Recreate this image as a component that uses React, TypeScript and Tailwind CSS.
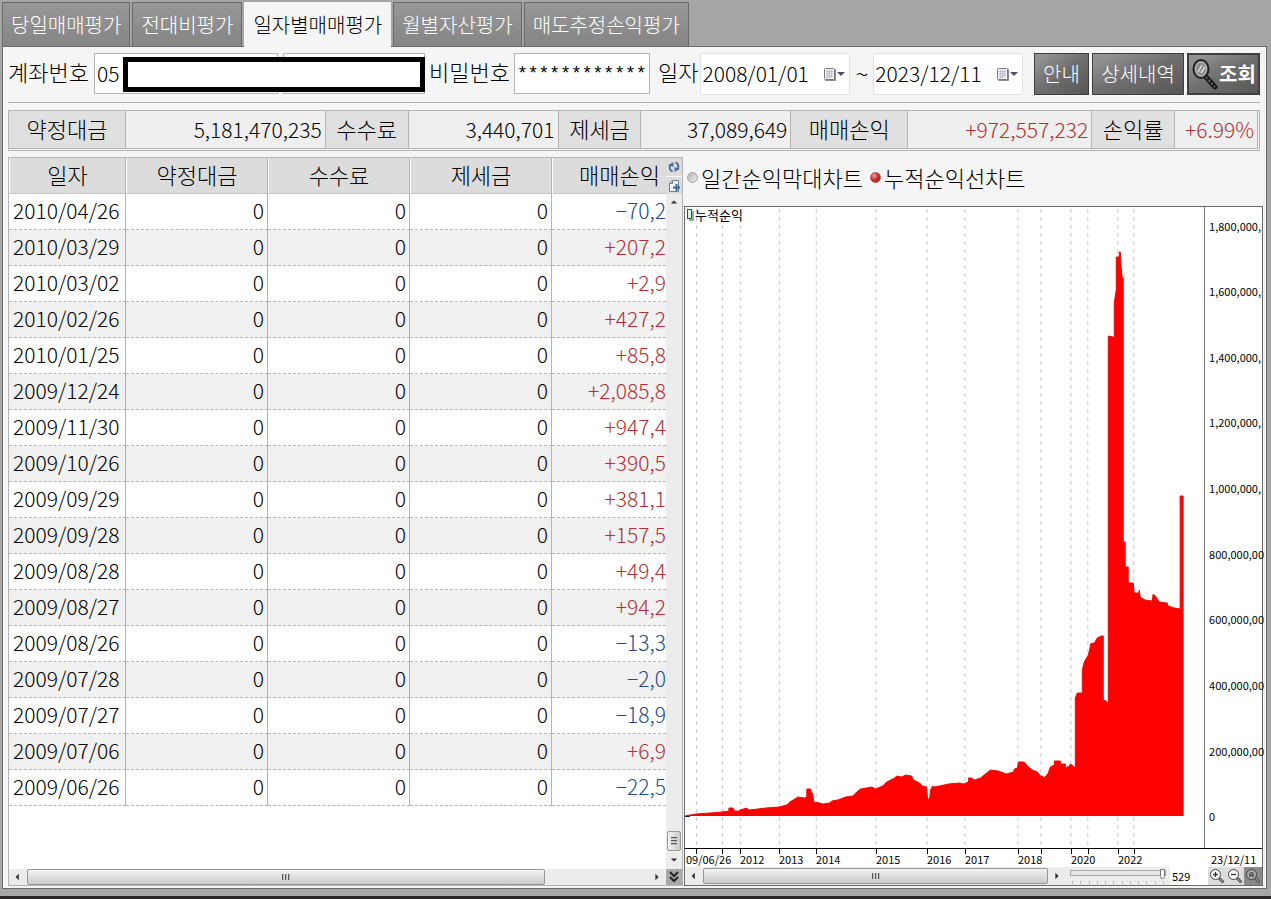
import { useState } from "react";
import type { ReactNode } from "react";

const TABS = ["당일매매평가", "전대비평가", "일자별매매평가", "월별자산평가", "매도추정손익평가"];

const ROWS: [string, string][] = [
  ["2010/04/26", "-70,2"],
  ["2010/03/29", "+207,2"],
  ["2010/03/02", "+2,9"],
  ["2010/02/26", "+427,2"],
  ["2010/01/25", "+85,8"],
  ["2009/12/24", "+2,085,8"],
  ["2009/11/30", "+947,4"],
  ["2009/10/26", "+390,5"],
  ["2009/09/29", "+381,1"],
  ["2009/09/28", "+157,5"],
  ["2009/08/28", "+49,4"],
  ["2009/08/27", "+94,2"],
  ["2009/08/26", "-13,3"],
  ["2009/07/28", "-2,0"],
  ["2009/07/27", "-18,9"],
  ["2009/07/06", "+6,9"],
  ["2009/06/26", "-22,5"],
];

const SUMMARY = [
  { label: "약정대금", value: "5,181,470,235", gain: false },
  { label: "수수료", value: "3,440,701", gain: false },
  { label: "제세금", value: "37,089,649", gain: false },
  { label: "매매손익", value: "+972,557,232", gain: true },
  { label: "손익률", value: "+6.99%", gain: true },
];

/* Plot space: x 0-520, y 0-641, zero line at y 609. */
const GRID_X = [11, 37, 55, 94, 131, 191, 242, 280, 333, 356, 386, 403, 433, 449];
const Y_LABELS = [
  { y: 19, text: "1,800,000," },
  { y: 84, text: "1,600,000," },
  { y: 150, text: "1,400,000," },
  { y: 215, text: "1,200,000," },
  { y: 281, text: "1,000,000," },
  { y: 347, text: "800,000,00" },
  { y: 412, text: "600,000,00" },
  { y: 478, text: "400,000,00" },
  { y: 544, text: "200,000,00" },
  { y: 609, text: "0" },
];
const X_LABELS = [
  { x: 1, text: "09/06/26" },
  { x: 55, text: "2012" },
  { x: 94, text: "2013" },
  { x: 131, text: "2014" },
  { x: 191, text: "2015" },
  { x: 242, text: "2016" },
  { x: 280, text: "2017" },
  { x: 333, text: "2018" },
  { x: 386, text: "2020" },
  { x: 433, text: "2022" },
  { x: 526, text: "23/12/11" },
];
const AREA =
  "0,609 5,608 11,607 25,606 37,605 44,604 44,601 48,601 50,604 55,604 55,603 62,601 64,603 73,602 81,601 94,600 102,598 105,595 110,592 113,590 120,591 122,590 122,582 126,582 126,584 128,587 129,595 135,596 138,597 145,596 147,594 153,593 161,590 168,589 172,585 176,582 187,580 191,582 198,579 202,575 210,571 212,569 217,570 221,568 227,569 229,573 235,576 238,579 242,580 243,592 245,592 246,583 248,579 249,580 255,579 264,577 275,576 279,577 284,575 284,571 287,571 290,573 296,571 301,567 306,563 314,564 322,567 329,565 330,562 333,561 334,555 340,555 343,559 348,563 353,565 356,569 358,569 360,571 364,566 366,560 370,558 370,554 376,554 376,557 381,557 381,561 385,559 386,557 389,559 391,561 391,491 393,486 398,486 398,463 400,455 404,448 406,440 406,437 410,436 413,431 417,429 419,429 419,493 422,494 424,496 424,129 429,130 430,131 430,96 432,83 432,50 435,50 435,45 436,45 437,62 438,71 439,71 439,335 441,335 441,360 444,360 444,376 449,376 450,386 455,386 455,383 456,390 461,393 468,394 469,387 472,390 475,395 483,396 484,399 490,401 496,402 496,289 499,289 499,609";

function Arrow({ dir }: { dir: "left" | "right" | "up" | "down" }) {
  const d = {
    left: "M6 1 L2 5 L6 9 Z",
    right: "M3 1 L7 5 L3 9 Z",
    up: "M1 7 L5 3 L9 7 Z",
    down: "M1 3 L5 7 L9 3 Z",
  }[dir];
  return (
    <svg viewBox="0 0 10 10" className="size-2" aria-hidden="true">
      <path d={d} fill="#333" />
    </svg>
  );
}

function HScroll({ children }: { children: ReactNode }) {
  return (
    <div className="flex h-4 items-center bg-[#ececec]">
      <button aria-label="왼쪽" className="flex w-[18px] justify-center"><Arrow dir="left" /></button>
      {children}
      <button aria-label="오른쪽" className="flex w-[18px] justify-center"><Arrow dir="right" /></button>
    </div>
  );
}

const THUMB =
  "flex items-center justify-center rounded-xs border border-[#979797] bg-linear-to-b from-[#f3f3f3] to-[#cbcbcb] h-4";

function Grip() {
  return (
    <svg viewBox="0 0 10 8" className="h-2 w-2.5" aria-hidden="true">
      <path d="M1.5 1v6M4.5 1v6M7.5 1v6" stroke="#555" />
      <path d="M2.5 1v6M5.5 1v6M8.5 1v6" stroke="#bbb" />
    </svg>
  );
}

function CalendarIcon() {
  return (
    <svg viewBox="0 0 22 14" className="h-3.5 w-[22px]" aria-hidden="true">
      <rect x="2" y="2" width="11" height="12" rx="1" fill="#8b8b98" />
      <rect x="1.500" y="1.500" width="10" height="11" rx="1" fill="#f4f4f7" stroke="#777784" />
      <path d="M3 4.500h7M3 6.500h7M3 8.500h7M3 10.500h5M4.500 3v8M6.500 3v8M8.500 3v7" stroke="#c0c0cc" />
      <path d="M14 5h8l-4 4z" fill="#4b5068" />
    </svg>
  );
}

function DateField({ label, value }: { label: string; value: string }) {
  const [text, setText] = useState(value);
  return (
    <div className="flex h-[42px] w-[150px] items-center rounded-xs border border-[#e2e2e2] bg-white pl-px">
      <input
        aria-label={label}
        value={text}
        onChange={(e) => setText(e.target.value)}
        className="w-0 min-w-0 flex-1 bg-transparent pb-0.5 text-[21px] leading-9 outline-none"
      />
      <button aria-label="달력" className="pr-1"><CalendarIcon /></button>
    </div>
  );
}

function Magnifier({ kind }: { kind: "plus" | "minus" | "all" }) {
  return (
    <svg viewBox="0 0 16 16" className="size-4" fill="none" aria-hidden="true">
      <path d="M10 10l4.500 4.500" stroke="#555" strokeWidth="3" />
      <path d="M10.500 10.500l3.500 3.500" stroke="#aaa" />
      <circle cx="6.500" cy="6.500" r="5" fill={kind === "all" ? "#aaa" : "#fafafa"} stroke="#444" />
      {kind !== "all" && <path d="M4 6.500h5" stroke="#333" strokeWidth="1.300" />}
      {kind === "plus" && <path d="M6.500 4v5" stroke="#333" strokeWidth="1.300" />}
      {kind === "all" && <path d="M5 9V5.500L6.500 4 8 5.500V9M5 7h3" stroke="#222" />}
    </svg>
  );
}

function SearchIcon() {
  return (
    <svg viewBox="0 0 28 32" className="h-8 w-7" fill="none" aria-hidden="true">
      <path d="M15 19l9 10" stroke="#1c1c1c" strokeWidth="5" strokeLinecap="round" />
      <path d="M15 19l9 10" stroke="#777" strokeWidth="1.500" strokeDasharray="2 2" />
      <ellipse cx="10" cy="11" rx="7.500" ry="9" fill="#8c8c8c" stroke="#222" strokeWidth="2" />
      <ellipse cx="10" cy="11" rx="5.500" ry="7" fill="#8a8a8a" stroke="#c9c9c9" />
      <path d="M7 14l4-7M10 15l4-6" stroke="#dedede" strokeWidth="1.500" />
    </svg>
  );
}

const DARK_BTN =
  "flex h-[42px] items-center justify-center border border-[#3f3f3f] bg-linear-to-br from-[#929292] from-10% via-[#6e6e6e] via-50% to-[#565656] text-white";

export default function App() {
  const [tab, setTab] = useState(2);
  const [mode, setMode] = useState("line");
  const [account, setAccount] = useState("05");
  const [password, setPassword] = useState("************");
  const [count, setCount] = useState("529");
  const [range, setRange] = useState(100);

  return (
    <div className="flex min-h-screen flex-col bg-[#a6a6a6] pt-0.5 font-['Noto_Sans_CJK_KR',sans-serif] font-light text-black">
      <nav className="flex h-11 gap-0.5 pl-0.5">
        {TABS.map((t, i) => (
          <button
            key={t}
            onClick={() => setTab(i)}
            className={
              i === tab
                ? "relative -mb-px border-x border-t border-[#f5f5f5] bg-[#f5f5f5] px-2 text-xl whitespace-nowrap"
                : "border-x border-t border-[#6a6a6a] bg-linear-to-b from-[#989898] to-[#858585] px-2 text-xl whitespace-nowrap text-white"
            }
          >
            {t}
          </button>
        ))}
      </nav>

      <main className="mr-1 ml-0.5 flex flex-1 flex-col border border-[#6a6a6a] bg-[#f5f5f5] pt-1.5 pb-0.5 pl-[5px]">
        <div className="mr-1.5 flex items-start border-b border-[#b4b4b4] pb-[7px] text-[22px] leading-9 whitespace-nowrap">
          <div className="relative flex gap-[5px]">
            <label htmlFor="account">계좌번호</label>
            <input
              id="account"
              value={account}
              onChange={(e) => setAccount(e.target.value)}
              className="h-[41px] w-[184px] border border-[#b4b4b4] bg-white pb-0.5 pl-0.5 text-[21px] outline-none"
            />
            <input aria-label="계좌명" className="h-[41px] w-[142px] border border-[#b4b4b4] bg-white outline-none" />
            <div className="absolute top-1 right-0 h-[35px] w-[302px] border-5 border-black bg-white" />
          </div>
          <div className="ml-1 flex gap-1">
            <label htmlFor="password">비밀번호</label>
            <input
              id="password"
              value={password}
              onChange={(e) => setPassword(e.target.value)}
              className="h-[41px] w-[136px] border border-[#b4b4b4] bg-white pl-0.5 font-['Liberation_Mono',monospace] text-lg outline-none"
            />
          </div>
          <div className="ml-2 flex gap-0.5">
            <span>일자</span>
            <DateField label="시작일" value="2008/01/01" />
            <span className="px-[3px] text-2xl leading-10">~</span>
            <DateField label="종료일" value="2023/12/11" />
          </div>
          <div className="ml-auto flex gap-[3px] text-xl">
            <button className={`${DARK_BTN} w-[55px]`}>안내</button>
            <button className={`${DARK_BTN} w-[92px]`}>상세내역</button>
            <button className={`${DARK_BTN} w-[73px] border-2 text-xl font-bold`}>
              <SearchIcon />
              조회
            </button>
          </div>
        </div>

        <dl className="mt-[7px] mr-1.5 grid grid-cols-[117fr_200fr_83fr_150fr_83fr_150fr_117fr_184fr_83fr_83fr] border border-[#b4b4b4] pr-px pb-px">
          {SUMMARY.map((s) => (
            <div key={s.label} className="contents">
              <dt className="h-[38px] overflow-hidden border-r border-b border-[#b4b4b4] bg-[#e0e0e0] text-center text-[22px] leading-[35px] whitespace-nowrap">
                {s.label}
              </dt>
              <dd
                className={
                  s.gain
                    ? "h-[38px] border-r border-b border-[#b4b4b4] bg-[#efefef] pr-[3px] text-right text-[21px] leading-9 text-[#b03030]"
                    : "h-[38px] border-r border-b border-[#b4b4b4] bg-[#efefef] pr-[3px] text-right text-[21px] leading-9"
                }
              >
                {s.value}
              </dd>
            </div>
          ))}
        </dl>

        <div className="mt-1.5 mr-[3px] grid flex-1 grid-cols-[675fr_579fr] gap-px">
          <section className="flex min-w-0 flex-col border border-[#b4b4b4] bg-white">
            <div className="flex flex-1">
              <div className="min-w-0 flex-1 overflow-hidden">
                <table className="w-full table-fixed border-separate border-spacing-0 whitespace-nowrap">
                  <colgroup>
                    <col className="w-[117px]" />
                    <col className="w-[142px]" />
                    <col className="w-[142px]" />
                    <col className="w-[142px]" />
                    <col />
                  </colgroup>
                  <thead>
                    <tr className="h-9 bg-[#dcdcdc] text-[22px] leading-8">
                      {["일자", "약정대금", "수수료", "제세금"].map((h) => (
                        <th key={h} className="border-r border-b border-l border-r-[#b4b4b4] border-b-[#c4c4c4] border-l-white p-0 pb-[3px] font-light">
                          {h}
                        </th>
                      ))}
                      <th className="border-b border-l border-b-[#c4c4c4] border-l-white p-0 pr-1.5 pb-[3px] text-right font-light">매매손익</th>
                    </tr>
                  </thead>
                  <tbody>
                    {ROWS.map(([date, pl]) => (
                      <tr key={date} className="h-9 text-[21px] leading-[33px] odd:bg-white even:bg-[#f1f1f1]">
                        <td className="border-r border-b border-[#b4b4b4] [border-bottom-style:dashed] p-0 pb-0.5 pl-1">{date}</td>
                        {[0, 1, 2].map((c) => (
                          <td key={c} className="border-r border-b border-[#b4b4b4] [border-bottom-style:dashed] p-0 pr-[3px] pb-0.5 text-right">
                            0
                          </td>
                        ))}
                        <td
                          className={
                            pl.startsWith("-")
                              ? "border-b border-dashed border-[#b4b4b4] p-0 pb-0.5 text-right text-[#254a88]"
                              : "border-b border-dashed border-[#b4b4b4] p-0 pb-0.5 text-right text-[#b03030]"
                          }
                        >
                          {pl.replace("-", "−")}
                        </td>
                      </tr>
                    ))}
                  </tbody>
                </table>
              </div>
              <div className="flex w-4 flex-col items-center bg-[#ececec]">
                <button aria-label="새로고침" className="flex h-[18px] w-full items-center justify-center bg-[#dcdcdc]">
                  <svg viewBox="0 0 12 12" className="size-3" fill="none" aria-hidden="true">
                    <path d="M4.500 10.500C1.500 9.500 1 6 2.500 3.500M7.500 1.500c3 1 3.500 4.500 2 7" stroke="#4c6f9f" strokeWidth="2" />
                    <path d="M.5 4L5.500 1v5zM11.500 8l-5 3V6z" fill="#4c6f9f" />
                  </svg>
                </button>
                <button aria-label="추가" className="flex h-[18px] w-full items-center justify-center border-t border-white bg-[#dcdcdc]">
                  <svg viewBox="0 0 12 14" className="h-3.5 w-3" fill="none" aria-hidden="true">
                    <path d="M4.500 1.500h6v11h-9v-8z" fill="#f3f6fa" stroke="#6a7f9c" />
                    <path d="M1.500 4.500h3v-3" stroke="#6a7f9c" />
                    <path d="M5 8.500h7M8.500 5v7" stroke="#40669b" strokeWidth="2" />
                  </svg>
                </button>
                <button aria-label="위로" className="flex h-4 items-center"><Arrow dir="up" /></button>
                <div className="flex-1" />
                <div className="flex h-5 w-3.5 items-center justify-center rounded-xs border border-[#979797] bg-linear-to-r from-[#f3f3f3] to-[#cbcbcb]">
                  <span className="rotate-90"><Grip /></span>
                </div>
                <button aria-label="아래로" className="flex h-[18px] items-center"><Arrow dir="down" /></button>
              </div>
            </div>
            <div className="flex">
              <div className="min-w-0 flex-1">
                <HScroll>
                  <div className="flex flex-1">
                    <div className={`${THUMB} w-5/6`}><Grip /></div>
                  </div>
                </HScroll>
              </div>
              <button aria-label="맨 아래로" className="flex h-4 w-4 items-center justify-center bg-[#a8a8a8]">
                <svg viewBox="0 0 10 12" className="h-3 w-2.5" fill="none" stroke="#222" strokeWidth="2" aria-hidden="true">
                  <path d="M1 1l4 4 4-4M1 6l4 4 4-4" />
                </svg>
              </button>
            </div>
          </section>

          <section className="flex min-w-0 flex-col">
            <div className="flex h-[49px] items-start pl-[3px] text-[22px] leading-10 whitespace-nowrap">
              {[
                { id: "bar", label: "일간순익막대차트" },
                { id: "line", label: "누적순익선차트" },
              ].map((o) => (
                <label key={o.id} className="mr-[7px] flex items-center gap-[3px]">
                  <input
                    type="radio"
                    name="mode"
                    checked={mode === o.id}
                    onChange={() => setMode(o.id)}
                    className="size-[11px] appearance-none rounded-full border border-[#a5a5a5] bg-linear-to-br from-[#b5b5b5] to-[#ededed] checked:border-[#b05050] checked:bg-radial-[at_35%_30%] checked:from-[#f0a0a0] checked:via-[#c42a2a] checked:to-[#9c1414]"
                  />
                  {o.label}
                </label>
              ))}
            </div>

            <div className="flex flex-1 flex-col border border-[#6a6a6a] bg-white text-[11px] leading-4 font-normal">
              <div className="flex flex-1">
                <div className="relative flex-[520]">
                  <svg viewBox="0 0 520 641" preserveAspectRatio="none" className="absolute inset-0 size-full">
                    {GRID_X.map((x) => (
                      <path key={x} d={`M${x + 0.5} 2V641`} stroke="#c3cbd0" strokeDasharray="4 4" />
                    ))}
                    <polygon points={AREA} fill="#ff0000" />
                    <polyline points={AREA} fill="none" stroke="#e01010" />
                    <path d="M0 609.500h5" stroke="#202060" />
                  </svg>
                  <div className="relative flex items-center gap-px pl-0.5">
                    <svg viewBox="0 0 7 12" className="h-3 w-[7px]" aria-hidden="true">
                      <rect x="2" y="2" width="5" height="10" fill="#8fb09a" />
                      <rect x=".5" y=".5" width="4" height="9" fill="#d9f2df" stroke="#2c5a3a" />
                    </svg>
                    <span className="text-[13px]">누적순익</span>
                  </div>
                </div>
                <div className="relative flex-[57] border-l border-[#777]">
                  {Y_LABELS.map((l) => (
                    <span key={l.text} className="absolute left-1 -translate-y-1/2 whitespace-nowrap" style={{ top: `${(l.y / 641) * 100}%` }}>
                      {l.text}
                    </span>
                  ))}
                </div>
              </div>
              <div className="relative h-[19px] border-t border-black">
                <svg viewBox="0 0 577 5" preserveAspectRatio="none" className="absolute top-0 left-0 h-[5px] w-full">
                  {GRID_X.map((x) => (
                    <path key={x} d={`M${x + 0.5} 0V5`} stroke="#000" />
                  ))}
                </svg>
                {X_LABELS.map((l) => (
                  <span key={l.text} className="absolute top-0.5 whitespace-nowrap" style={{ left: `${(l.x / 577) * 100}%` }}>
                    {l.text}
                  </span>
                ))}
              </div>
              <div className="flex h-[18px] items-center bg-[#ececec]">
                <div className="min-w-0 flex-1">
                  <HScroll>
                    <div className={`${THUMB} flex-1`}><Grip /></div>
                  </HScroll>
                </div>
                <div className="ml-1 flex w-24 flex-col gap-1">
                  <input
                    type="range"
                    aria-label="확대"
                    value={range}
                    onChange={(e) => setRange(Number(e.target.value))}
                    className="h-2 w-full appearance-none bg-transparent [&::-webkit-slider-runnable-track]:h-1.5 [&::-webkit-slider-runnable-track]:border [&::-webkit-slider-runnable-track]:border-[#a9a9a9] [&::-webkit-slider-runnable-track]:bg-[#e7e7e7] [&::-webkit-slider-thumb]:-mt-0.5 [&::-webkit-slider-thumb]:h-2.5 [&::-webkit-slider-thumb]:w-[5px] [&::-webkit-slider-thumb]:appearance-none [&::-webkit-slider-thumb]:rounded-b-sm [&::-webkit-slider-thumb]:border [&::-webkit-slider-thumb]:border-[#777] [&::-webkit-slider-thumb]:bg-white"
                  />
                  <div className="flex justify-between px-0.5">
                    {Array.from({ length: 12 }, (_, i) => (
                      <span key={i} className="h-[3px] w-px bg-[#b5b5b5]" />
                    ))}
                  </div>
                </div>
                <input
                  aria-label="개수"
                  value={count}
                  onChange={(e) => setCount(e.target.value)}
                  className="ml-1 h-[18px] w-[38px] bg-white pl-0.5 outline-none"
                />
                <button aria-label="확대" className="flex h-[18px] w-[18px] items-center justify-center bg-[#dcdcdc]"><Magnifier kind="plus" /></button>
                <button aria-label="축소" className="flex h-[18px] w-[18px] items-center justify-center bg-[#dcdcdc]"><Magnifier kind="minus" /></button>
                <button aria-label="전체" className="flex h-[18px] w-[18px] items-center justify-center bg-[#8a8a8a]"><Magnifier kind="all" /></button>
              </div>
            </div>
          </section>
        </div>
      </main>
      <div className="mt-[7px] h-[3px] bg-[#2a2627]" />
    </div>
  );
}
